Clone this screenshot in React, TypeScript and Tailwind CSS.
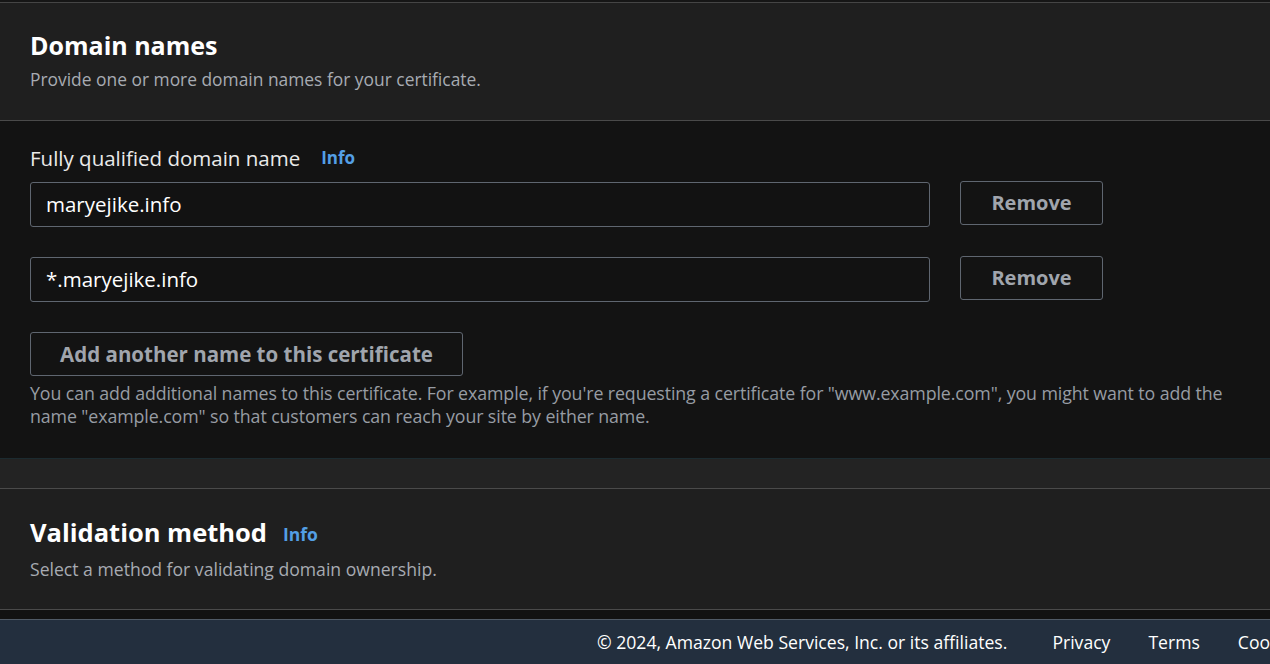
import React from 'react'

const font = { fontFamily: '"Open Sans", "Noto Sans", Arial, sans-serif' }

const Info = ({ className = '' }: { className?: string }) => (
  <span className={`font-bold text-[#539fe5] ${className}`}>Info</span>
)

const DomainRow = ({ value }: { value: string }) => (
  <div className="flex items-start">
    <div className="mt-[1px] w-[900px] h-[45px] border border-[#5f6670] rounded-[3px] bg-[#121212] flex items-center px-[15px] text-[20.5px] text-white">
      {value}
    </div>
    <button className="ml-[30px] w-[143px] h-[44px] border border-[#5f6670] rounded-[3px] text-[20px] font-bold text-[#a0a5ad]">
      Remove
    </button>
  </div>
)

export default function App() {
  return (
    <div className="w-[1270px] h-[664px] overflow-hidden bg-[#121212] flex flex-col" style={font}>
      <div className="h-[2px] bg-[#161616]" />
      <div className="border-t border-[#454545] bg-[#1f1f1f] h-[118px] px-[30px] pt-[26px]">
        <h2 className="text-[25px] font-bold text-white leading-[32px]">Domain names</h2>
        <p className="text-[17.4px] text-[#a7abb2] leading-[24px] mt-[6px]">Provide one or more domain names for your certificate.</p>
      </div>
      <div className="border-t border-[#4a4a4a] bg-[#131313] h-[338px] px-[30px] pt-[25px]">
        <div className="flex items-center text-[20.5px] text-[#eaeaea] leading-[24px]">
          <span>Fully qualified domain name</span>
          <Info className="ml-[21px] text-[17px]" />
        </div>
        <div className="mt-[11px] flex flex-col gap-[29px]">
          <DomainRow value="maryejike.info" />
          <DomainRow value="*.maryejike.info" />
        </div>
        <button className="mt-[30px] h-[44px] w-[433px] border border-[#5f6670] rounded-[3px] text-[20.5px] font-bold text-[#a0a5ad]">
          Add another name to this certificate
        </button>
        <p className="mt-[6px] text-[17.8px] leading-[23px] text-[#979ca3] tracking-[-0.1px]">
          You can add additional names to this certificate. For example, if you're requesting a certificate for "www.example.com", you might want to add the name "example.com" so that customers can reach your site by either name.
        </p>
      </div>
      <div className="border-t border-[#1c2b30] bg-[#232323] h-[30px]" />
      <div className="border-t border-[#4a4a4a] bg-[#1f1f1f] h-[121px] px-[30px] pt-[26px]">
        <div className="flex items-center">
          <h2 className="text-[25.5px] font-bold text-white leading-[34px]">Validation method</h2>
          <Info className="ml-[16px] text-[17.5px] mt-[4px]" />
        </div>
        <p className="mt-[8px] text-[17.6px] text-[#a7abb2] leading-[24px]">Select a method for validating domain ownership.</p>
      </div>
      <div className="border-t border-[#4a4a4a] bg-[#121212] h-[10px]" />
      <footer className="border-t border-[#505a66] bg-[#232f3e] flex-1 flex items-center text-[17.6px] text-white whitespace-nowrap pl-[597px]">
        <span>© 2024, Amazon Web Services, Inc. or its affiliates.</span>
        <span className="ml-[45px]">Privacy</span>
        <span className="ml-[38px]">Terms</span>
        <span className="ml-[38px]">Cookie preferences</span>
      </footer>
    </div>
  )
}
